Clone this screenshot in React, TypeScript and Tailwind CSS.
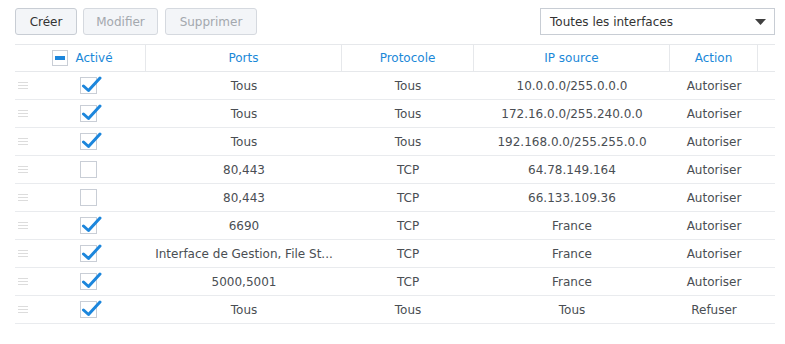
import React from 'react';

type Rule = {
  enabled: boolean;
  ports: string;
  protocol: string;
  source: string;
  action: string;
};

const rules: Rule[] = [
  { enabled: true, ports: 'Tous', protocol: 'Tous', source: '10.0.0.0/255.0.0.0', action: 'Autoriser' },
  { enabled: true, ports: 'Tous', protocol: 'Tous', source: '172.16.0.0/255.240.0.0', action: 'Autoriser' },
  { enabled: true, ports: 'Tous', protocol: 'Tous', source: '192.168.0.0/255.255.0.0', action: 'Autoriser' },
  { enabled: false, ports: '80,443', protocol: 'TCP', source: '64.78.149.164', action: 'Autoriser' },
  { enabled: false, ports: '80,443', protocol: 'TCP', source: '66.133.109.36', action: 'Autoriser' },
  { enabled: true, ports: '6690', protocol: 'TCP', source: 'France', action: 'Autoriser' },
  { enabled: true, ports: 'Interface de Gestion, File St...', protocol: 'TCP', source: 'France', action: 'Autoriser' },
  { enabled: true, ports: '5000,5001', protocol: 'TCP', source: 'France', action: 'Autoriser' },
  { enabled: true, ports: 'Tous', protocol: 'Tous', source: 'Tous', action: 'Refuser' },
];

function Checkbox({ checked }: { checked: boolean }) {
  return (
    <div className="relative w-[17px] h-[17px] border border-[#c9ced6] bg-white">
      {checked && (
        <svg className="absolute left-[1px] top-[-2px]" width="20" height="17" viewBox="0 0 20 17">
          <path d="M1.5 10 L6.5 14.5 L18 2" fill="none" stroke="#1c86dc" strokeWidth={3} strokeLinecap="round" strokeLinejoin="round" />
        </svg>
      )}
    </div>
  );
}

function DragHandle() {
  return (
    <div className="flex flex-col gap-[2px] w-[10px]">
      <span className="h-px bg-[#dcdcdc]" />
      <span className="h-px bg-[#dcdcdc]" />
      <span className="h-px bg-[#dcdcdc]" />
    </div>
  );
}

export default function App() {
  return (
    <div className="w-[785px] h-[344px] bg-white text-[12px] text-[#4a4e53]" style={{ fontFamily: '"DejaVu Sans", Verdana, sans-serif' }}>
      {/* Toolbar */}
      <div className="flex items-center px-[15px] pt-[8px] h-[35px]">
        <button className="h-[27px] w-[62px] rounded-[3px] border border-[#c8cdd4] bg-[#f3f5f8] text-[#333]">Créer</button>
        <button className="ml-[6px] h-[27px] w-[75px] rounded-[3px] border border-[#d5d9df] bg-[#f3f5f8] text-[#a3a8ae]">Modifier</button>
        <button className="ml-[7px] h-[27px] w-[92px] rounded-[3px] border border-[#d5d9df] bg-[#f3f5f8] text-[#a3a8ae]">Supprimer</button>
        <div className="ml-auto mr-[-5px] flex h-[27px] w-[235px] items-center justify-between border border-[#c8cdd4] bg-white pl-[9px] pr-[8px] text-[#333]">
          <span>Toutes les interfaces</span>
          <svg width="11" height="6" viewBox="0 0 11 6">
            <path d="M0 0 H11 L5.5 6 Z" fill="#404040" />
          </svg>
        </div>
      </div>

      {/* Table */}
      <div className="mx-[15px] mt-[9px] w-[760px]">
        <div className="flex h-[28px] items-center border-y border-[#e6e8eb] text-[#1b88d8]">
          <div className="flex h-full w-[131px] items-center justify-center gap-[7px] border-r border-[#e6e8eb] pl-[5px]">
            <div className="flex h-[16px] w-[16px] items-center justify-center border border-[#c9ced6] bg-white">
              <span className="h-[4px] w-[10px] bg-[#1c86dc]" />
            </div>
            <span>Activé</span>
          </div>
          <div className="flex h-full w-[196px] items-center justify-center border-r border-[#e6e8eb]">Ports</div>
          <div className="flex h-full w-[132px] items-center justify-center border-r border-[#e6e8eb]">Protocole</div>
          <div className="flex h-full w-[196px] items-center justify-center border-r border-[#e6e8eb]">IP source</div>
          <div className="flex h-full w-[88px] items-center justify-center border-r border-[#e6e8eb]">Action</div>
          <div className="h-full flex-1" />
        </div>
        {rules.map((r, i) => (
          <div key={i} className="flex h-[28px] items-center border-b border-[#e9ebee]">
            <div className="flex h-full w-[131px] items-center pl-[3px]">
              <DragHandle />
              <div className="ml-[52px]">
                <Checkbox checked={r.enabled} />
              </div>
            </div>
            <div className="w-[196px] text-center">{r.ports}</div>
            <div className="w-[132px] text-center">{r.protocol}</div>
            <div className="w-[196px] text-center">{r.source}</div>
            <div className="w-[88px] text-center">{r.action}</div>
            <div className="flex-1" />
          </div>
        ))}
      </div>
    </div>
  );
}
